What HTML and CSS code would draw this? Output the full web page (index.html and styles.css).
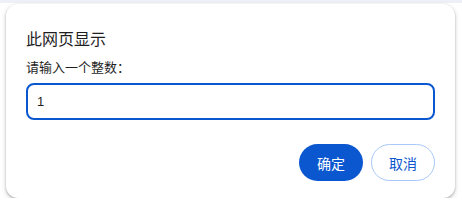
FILE: index.html
```html
<!DOCTYPE html>
<html lang="zh-CN">
<head>
    <meta charset="UTF-8">
    <title>此网页显示</title>
    <link rel="stylesheet" href="styles.css">
</head>
<body>
<div class="topbar"></div>
<div class="dialog">
    <div class="title">此网页显示</div>
    <div class="message">请输入一个整数：</div>
    <input class="prompt" type="text" value="1">
    <div class="buttons">
        <button class="ok">确定</button>
        <button class="cancel">取消</button>
    </div>
</div>
</body>
</html>
```

FILE: styles.css
```css
body {
    margin: 0;
    background-color: white;
    color: #1f1f1f;
    font-family: "Noto Sans CJK SC", "Noto Sans", sans-serif;
}

.topbar {
    height: 3px;
    background-color: #edf0f6;
}

.dialog {
    margin: 1px 7px 0 6px;
    height: 194px;
    box-sizing: border-box;
    padding: 24px 20px 17px;
    background-color: white;
    border-radius: 12px;
    box-shadow: 0 1px 2px rgba(0, 0, 0, 0.25), 0 2px 4px 1px rgba(0, 0, 0, 0.12);
    display: flex;
    flex-direction: column;
}

.title {
    font-size: 16px;
    line-height: 20px;
}

.message {
    margin-top: 9px;
    font-size: 13px;
    line-height: 20px;
}

.prompt {
    margin-top: 6px;
    height: 37px;
    box-sizing: border-box;
    border: 2px solid #0b57d0;
    border-radius: 8px;
    padding: 0 9px;
    font-family: "Liberation Sans", sans-serif;
    font-size: 13px;
    color: #1f1f1f;
    outline: none;
}

.buttons {
    margin-top: auto;
    display: flex;
    justify-content: flex-end;
    gap: 8px;
}

.buttons button {
    width: 64px;
    height: 37px;
    border-radius: 19px;
    font-family: "Noto Sans CJK SC", sans-serif;
    font-size: 14px;
    padding: 0;
}

.ok {
    background-color: #0b57d0;
    border: none;
    color: white;
}

.cancel {
    background-color: white;
    border: 1px solid #a8c7fa;
    color: #0b57d0;
}
```
